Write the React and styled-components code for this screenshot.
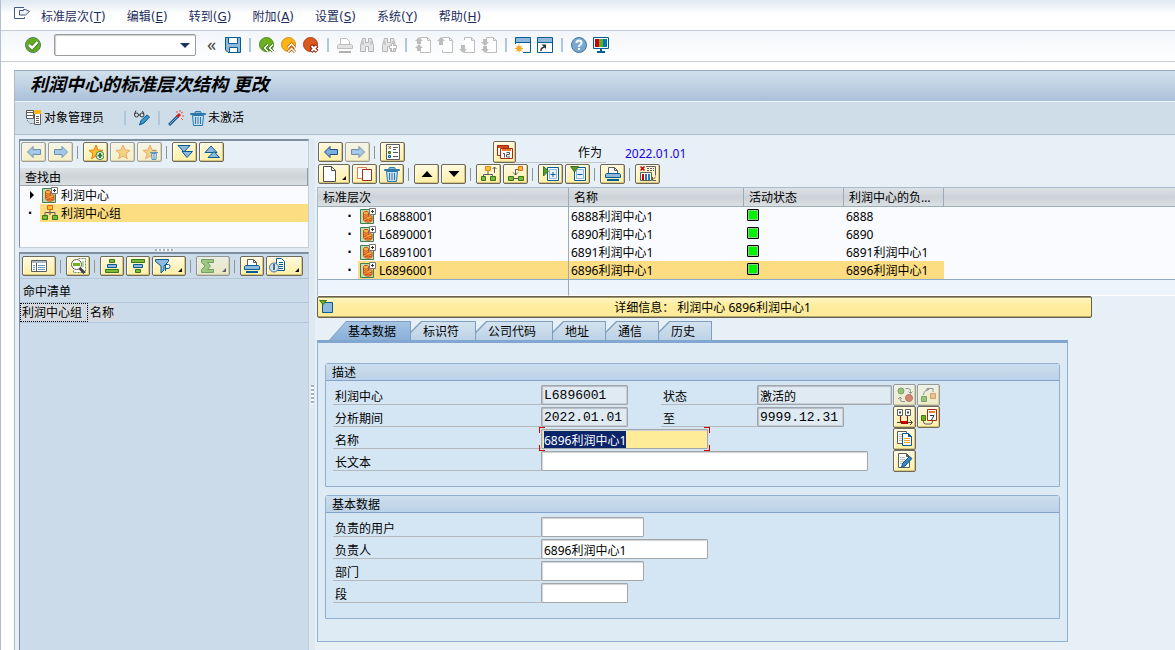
// App.jsx

import React, { useEffect, useRef } from 'react';
import styled, { createGlobalStyle, css } from 'styled-components';

const GlobalStyle = createGlobalStyle`
  * {
    box-sizing: border-box;
  }
  body {
    margin: 0;
    background: #fff;
    color: #000;
    font: 12px/16px 'Noto Sans', 'Noto Sans CJK SC', sans-serif;
  }
  button, input {
    font: inherit;
    color: inherit;
    margin: 0;
  }
  ::selection {
    background: #0a246a;
    color: #fff;
  }
`;

/* ---------- icons ---------- */

const BLUE = '#045d92';
const SKY = '#8fb8dc';
const GREEN = '#6fb021';
const ORANGE = '#f5a623';
const RED = '#d2481f';
const GREY = '#5c5c5c';
const OFF = '#bdbdbd';

const page = (
  <path d="M5.5 3V.5h7l3 3v12h-10V13M12.5 .5v3h3" fill="#fff" stroke={OFF} />
);

const profitCenter = (
  <>
    <path d="M.5 1.5h13v14H.5z" fill="#bfdcb4" stroke="#41804a" />
    <path d="M3.5 4.500c0-1.500 5-1.500 5 0v4c1-1 3.500-1 3.500 0v4c0 1.500-4 2-5.500 1.500-2-.5-3-1.500-3-3z" fill="#f8b43a" stroke="#d2481f" />
    <path d="M3.500 6.500q2.500 1.500 5 0M3.500 8.500q2.500 1.500 5 0M4 10.500q4 2 8-.5M5 12.500q4 1 7-.5" fill="none" stroke="#d2481f" />
    <path d="M9.500 .5h6v6h-6z" fill="#fff" stroke="#777" />
    <path d="M12.500 2v3M11 3.500h3" stroke="#333" />
  </>
);

const star = (
  <path d="M8 1l2 5 5 .4-4 3.400 1.300 5L8 12l-4.400 2.800L5 9.800 1 6.400 6 6z" fill="#fbc02d" stroke="#ee7a1c" />
);

const printer = (
  <>
    <path d="M3.500 7.500v-6h6l3 3v3z" fill="#fff" stroke={GREY} />
    <path d="M9.500 1.500v3h3" fill="none" stroke={GREY} />
    <path d="M1.500 7.500h13l1 1v3H.5v-3z" fill={SKY} stroke={BLUE} />
    <path d="M2 14h12" stroke={BLUE} strokeWidth="2" />
  </>
);

const binoculars = (
  <path
    d="M3.500 1.500h3v4h3v-4h3l2 7v6h-5v-5h-3v5h-5v-6zM4 4v4M12 4v4"
    fill="#e4e4e4"
    stroke="#b5b5b5"
  />
);

const trash = (
  <>
    <path d="M2.500 5.500h11l-1 10h-9z" fill="#c5dff0" stroke="#2c78ab" />
    <path d="M.5 3.500h15v1H.5zM4.500 3.500l1-2h5l1 2" fill={SKY} stroke="#2c78ab" />
    <path d="M5.500 7v7M8 7v7M10.500 7v7" stroke="#2c78ab" />
  </>
);

const icons = {
  exit: (
    <>
      <path d="M10 .5H.5v11h10V10" fill="none" stroke="#44577f" />
      <path d="M5.500 3.500h4v-1h2l4 2-4 3.500h-6z" fill="#eef3fb" stroke="#44577f" />
    </>
  ),
  check: (
    <>
      <circle cx="8" cy="8" r="7.500" fill="#65ab20" stroke="#4c8060" />
      <path d="M4 8l3 3 5.500-6" fill="none" stroke="#3c7420" strokeWidth="4" />
      <path d="M4 8l3 3 5.500-6" fill="none" stroke="#fff" strokeWidth="2.500" />
    </>
  ),
  save: (
    <>
      <path d="M.5 .5h15v15H3l-2.500-2.500z" fill={SKY} stroke={BLUE} />
      <path d="M3.500 .5h9v6h-9z" fill="#fff" stroke={BLUE} />
      <path d="M4.500 10.500h8v5h-8z" fill="#fff" stroke={BLUE} />
    </>
  ),
  back: (
    <>
      <circle cx="7.500" cy="7.500" r="7" fill="#6fb021" stroke="#4d8b1f" />
      <path d="M9 7.500l-3.500 3.500L9 14.500M14 7.500L10.500 11l3.500 3.500" fill="none" stroke="#356f12" strokeWidth="3" />
      <path d="M9 7.500l-3.500 3.500L9 14.500M14 7.500L10.500 11l3.500 3.500" fill="none" stroke="#fff" strokeWidth="1.500" />
    </>
  ),
  up: (
    <>
      <circle cx="7.500" cy="7.500" r="7" fill="#fcb514" stroke="#d98e0b" />
      <path d="M7 10.500L10.500 7l3.500 3.500M7 15l3.500-3.500L14 15" fill="none" stroke="#b5560e" strokeWidth="3" />
      <path d="M7 10.500L10.500 7l3.500 3.500M7 15l3.500-3.500L14 15" fill="none" stroke="#fff" strokeWidth="1.500" />
    </>
  ),
  cancel: (
    <>
      <circle cx="7.500" cy="7.500" r="7" fill="#d95a1c" stroke="#b23c10" />
      <path d="M8 8.500l6 6M14 8.500l-6 6" stroke="#8c2109" strokeWidth="4" />
      <path d="M8.500 9l5 5M13.500 9l-5 5" stroke="#fff" strokeWidth="2" />
    </>
  ),
  printOff: (
    <>
      <path d="M3.500 7.500v-6h6l3 3v3" fill="#fff" stroke={OFF} />
      <path d="M1.500 7.500h13l1 1v3H.5v-3z" fill="#e2e2e2" stroke={OFF} />
      <path d="M2 15h12" stroke="#b0b0b0" strokeWidth="2" />
    </>
  ),
  find: binoculars,
  findNext: (
    <>
      {binoculars}
      <path d="M10.500 6.500h2v2h3v3h-3v3h-2v-3h-2v-3h2z" fill="#fff" stroke="#b5b5b5" />
    </>
  ),
  firstPage: (
    <>
      {page}
      <path d="M0 4l4-4 4 4H6v3H2V4zM0 11l4-4 4 4H6v3H2v-3z" fill={OFF} />
    </>
  ),
  prevPage: (
    <>
      {page}
      <path d="M0 4l4-4 4 4H6v4H2V4z" fill={OFF} />
    </>
  ),
  nextPage: (
    <>
      {page}
      <path d="M0 12l4 4 4-4H6V8H2v4z" fill={OFF} />
    </>
  ),
  lastPage: (
    <>
      {page}
      <path d="M0 5l4 4 4-4H6V2H2v3zM0 12l4 4 4-4H6V9H2v3z" fill={OFF} />
    </>
  ),
  newWindow: (
    <>
      <path d="M.5 .5h15v15h-15z" fill="#fff" stroke={BLUE} />
      <path d="M1 1h14v4H1z" fill={SKY} />
      <path d="M1 5.500h14" stroke={BLUE} />
      <path d="M0 7h8v9H0z" fill="#fff" />
      <path d="M4 7.500v8M0 11.500h8M1 8.500l6 6M7 8.500l-6 6" stroke={ORANGE} />
      <circle cx="4" cy="11.500" r="2.500" fill={ORANGE} />
    </>
  ),
  shortcut: (
    <>
      <path d="M.5 .5h15v15h-15z" fill="#fff" stroke={BLUE} />
      <path d="M1 1h14v4H1z" fill={SKY} />
      <path d="M1 5.500h14" stroke={BLUE} />
      <path d="M4 14q-.5-3 3.500-4" fill="none" stroke="#333" strokeWidth="1.500" />
      <path d="M4.500 7.500H9V12z" fill="#333" />
    </>
  ),
  help: (
    <>
      <circle cx="8" cy="8" r="7.500" fill="#78a8ce" stroke="#41789f" />
      <path d="M5.500 6q0-2.500 2.500-2.500T10.500 6q0 1-1.300 1.800T8 9.800M8 11v2" fill="none" stroke="#fff" strokeWidth="2" />
    </>
  ),
  monitor: (
    <>
      <path d="M.5 .5h15v11H.5z" fill="#fff" stroke={BLUE} />
      <path d="M2 2h4v8H2z" fill="#d00000" />
      <path d="M6 2h4v8H6z" fill="#63ad1c" />
      <path d="M10 2h4v8h-4z" fill="#0077bb" />
      <path d="M8 12v3M4 15h8" stroke={BLUE} strokeWidth="2" />
    </>
  ),
  objectManager: (
    <>
      <path d="M.5 .5h7v8h-7z" fill="#fff" stroke={GREY} />
      <path d="M1 2.500h6M1 5.500h6" stroke={GREY} />
      <path d="M8.500 .5h6v14h-6z" fill="#fff" stroke={GREY} />
      <path d="M8 0h7v4H8z" fill="#fbb51a" />
      <path d="M10 6.500h3M10 8.500h3M10 10.500h3M10 12.500h3" stroke={GREY} />
      <path d="M1 10l3 3.500h4" fill="none" stroke={GREY} strokeDasharray="1 1" />
    </>
  ),
  glassesPencil: (
    <>
      <circle cx="2.500" cy="5" r="2" fill="none" stroke="#333" />
      <circle cx="8" cy="5" r="2" fill="none" stroke="#333" />
      <path d="M.5 4L2 .5M10 4L8.500 1M4.500 5h1.500" stroke="#333" fill="none" />
      <path d="M5.500 15l1.500-4.500 6-5.500 2.500 2L10 13z" fill="#3f93ca" stroke={BLUE} />
    </>
  ),
  wand: (
    <>
      <path d="M1 15L10 6" stroke="#205a8c" strokeWidth="3" />
      <path d="M1.500 14.500L9 7" stroke="#74acd6" />
      <path d="M9 7l3-3" stroke="#d21f1f" strokeWidth="3" />
      <path d="M9 1v2M12 0v2M15 2l-2 1M14 6h2M13 8l2 2" stroke="#e8592a" />
    </>
  ),
  trash,
  arrowLeft: (
    <path d="M1.500 8L7 2.500v3h7.500v5H7v3z" fill="#79aede" stroke="#1c527f" />
  ),
  arrowRight: (
    <path d="M14.500 8L9 2.500v3H1.500v5H9v3z" fill="#79aede" stroke="#1c527f" />
  ),
  starAdd: (
    <>
      {star}
      <circle cx="12" cy="11.500" r="4" fill="#fff" stroke="#397a43" />
      <path d="M12 9v5M9.500 11.500h5" stroke="#2e7d32" strokeWidth="2" />
    </>
  ),
  star,
  starTrash: (
    <>
      {star}
      <path d="M9.500 9.500h5l-.5 6h-4z" fill="#c5dff0" stroke={BLUE} />
      <path d="M8 8.500h8M10.500 6.500h3M12 10v5" stroke={BLUE} />
    </>
  ),
  expandAll: (
    <>
      <path d="M5 7.500h10.500L10 13.500z" fill={SKY} stroke={BLUE} />
      <path d="M1 1.500h12L7 8z" fill={SKY} stroke={BLUE} />
    </>
  ),
  collapseAll: (
    <>
      <path d="M1 8.500h12L7 2z" fill={SKY} stroke={BLUE} />
      <path d="M4 13.500h11.500L10 7.500z" fill={SKY} stroke={BLUE} />
    </>
  ),
  profitCenter,
  group: (
    <>
      <path d="M8 5v5M3 10V7.500h10V10" fill="none" stroke={GREY} />
      <path d="M5.500 .5h5v4h-5z" fill="#fbc02d" stroke="#e8641b" />
      <path d="M.5 10.500h5v4h-5zM10.500 10.500h5v4h-5z" fill="#7cba3a" stroke="#3c7420" />
    </>
  ),
  detailList: (
    <>
      <path d="M.5 2.500h15v11H.5z" fill="#fff" stroke={GREY} />
      <path d="M1 3h14v2H1z" fill="#aab8c4" />
      <path d="M5.500 5v8" stroke={GREY} />
      <path d="M2 7.500h2M2 9.500h2M2 11.500h2M7 7.500h7M7 9.500h7M7 11.500h7" stroke="#6699c2" />
    </>
  ),
  magnifier: (
    <>
      <path d="M8.500 .5h7v14h-12v-3" fill="#fff" stroke="#6c8f5c" strokeDasharray="2 1" />
      <circle cx="6.500" cy="6.500" r="5" fill="#fff" stroke={GREY} />
      <path d="M3 5h7v3H3z" fill={GREEN} />
      <path d="M9.500 10l5 5" stroke="#444" strokeWidth="3" />
      <path d="M12 4h2M12 6h2M12 8h2" stroke={GREEN} />
    </>
  ),
  sortAsc: (
    <>
      <path d="M5.500 1.500h5v3h-5z" fill="#7cba3a" stroke="#3c7420" />
      <path d="M3.500 6.500h9v3h-9z" fill={SKY} stroke={BLUE} />
      <path d="M1.500 11.500h13v3h-13z" fill="#7cba3a" stroke="#3c7420" />
    </>
  ),
  sortDesc: (
    <>
      <path d="M1.500 1.500h13v3h-13z" fill="#7cba3a" stroke="#3c7420" />
      <path d="M3.500 6.500h9v3h-9z" fill={SKY} stroke={BLUE} />
      <path d="M5.500 11.500h5v3h-5z" fill="#7cba3a" stroke="#3c7420" />
    </>
  ),
  filter: (
    <>
      <path d="M.5 1.500h13v2L9 8v4l-3 3V8L.5 3.500z" fill={SKY} stroke={BLUE} />
      <path d="M10.500 13V6.500h3q1.500 0 1.500 2t-1.500 2h-3" fill="#fff" stroke={BLUE} />
    </>
  ),
  sum: (
    <path d="M2.500 1.500h12v3h-6l3 3.500-3 3.500h6v3h-12v-3L6 8 2.500 4.500z" fill="#7cba3a" stroke="#3c7420" />
  ),
  printer,
  layoutView: (
    <>
      <path d="M7.500 .5h5l3 3v9h-8z" fill="#fff" stroke={BLUE} />
      <path d="M10 4.500h4M10 6.500h4M10 8.500h4M10 10.500h4" stroke={BLUE} />
      <circle cx="5" cy="9.500" r="4.500" fill="#d2e2ee" stroke="#49728f" />
      <path d="M5 6v6" stroke="#49728f" strokeWidth="2" />
    </>
  ),
  checklist: (
    <>
      <path d="M1.500 .5h13v15h-13z" fill="#fff" stroke={GREY} />
      <path d="M3.500 2l2.500 3M6 2L3.500 5" stroke="#8a6516" />
      <path d="M3.500 7.500h2v2h-2z" fill={GREEN} stroke="#3c7420" />
      <path d="M3.500 11.500h2v2h-2z" fill={SKY} stroke={BLUE} />
      <path d="M8 3.500h5M8 5.500h3M8 8.500h5M8 12.500h5" stroke={GREY} />
    </>
  ),
  calendar: (
    <>
      <path d="M.5 1.500h11v10H.5z" fill="#fff" stroke="#a3290f" />
      <path d="M1 2h10v2H1z" fill={RED} />
      <path d="M3.500 4.500h12v10h-12z" fill="#fff" stroke="#a3290f" />
      <path d="M5 5h9v2H5z" fill="#f07a28" />
      <path d="M6 9.500h1.500v4M9.500 8.500h3v2h-3v2.500h3.500" fill="none" stroke="#555" />
    </>
  ),
  create: (
    <path d="M2.500 .5h8l4 4v11h-12zM10.500 .5v4h4" fill="#fff" stroke="#4f4f4f" />
  ),
  copy: (
    <>
      <path d="M.5 1.500h9v11h-9z" fill="#fff" stroke="#d9805e" />
      <path d="M5.500 3.500h9v11h-9z" fill="#fff" stroke="#a3290f" />
    </>
  ),
  triUp: <path d="M2.500 11L8 5l5.500 6z" fill="#000" />,
  triDown: <path d="M2.500 5L8 11l5.500-6z" fill="#000" />,
  moveUp: (
    <>
      <path d="M7 5v4M2.500 11V8.500h9V11" fill="none" stroke={GREY} />
      <path d="M4.500 .5h5v4h-5z" fill="#fbc02d" stroke="#e8891b" />
      <path d="M.5 10.500h4v4h-4zM9.500 10.500h5v4h-5z" fill="#7cba3a" stroke="#3c7420" />
      <path d="M13.500 7V1M11.500 3l2-2 2 2" fill="none" stroke={GREY} />
    </>
  ),
  moveDown: (
    <>
      <path d="M10 3.500H7.500V9M5 6.500L7.500 9 10 6.500M5 12.500h5" fill="none" stroke={GREY} />
      <path d="M10.500 .5h4v4h-4z" fill="#fbc02d" stroke="#e8641b" />
      <path d="M.5 10.500h5v4h-5zM10.500 10.500h5v4h-5z" fill="#7cba3a" stroke="#3c7420" />
    </>
  ),
  expandNode: (
    <>
      <path d="M4.500 1.500h11v13h-11z" fill="#fff" stroke={BLUE} />
      <path d="M6.500 3.500h7v9h-7z" fill="#e7f1f9" stroke={SKY} />
      <path d="M10 6v5M7.500 8.500h5" stroke={BLUE} />
      <path d="M.5 .5L5.500 5l-5 5z" fill="#58982c" stroke="#3c7420" />
    </>
  ),
  collapseNode: (
    <>
      <path d="M4.500 1.500h11v13h-11z" fill="#fff" stroke={BLUE} />
      <path d="M6.500 3.500h7v9h-7z" fill="#e7f1f9" stroke={SKY} />
      <path d="M7.500 8.500h5" stroke={BLUE} />
      <path d="M.5 .5h8L4.500 6z" fill="#58982c" stroke="#3c7420" />
    </>
  ),
  tableDelete: (
    <>
      <path d="M6 .5h9.500v9" fill="none" stroke={GREY} />
      <path d="M7 2.500h7M7 4.500h7" stroke={GREY} strokeDasharray="2 1" />
      <path d="M.5 .5l4 4M4.500 .5l-4 4" stroke="#c00" strokeWidth="1.500" />
      <path d="M.5 6.500h11v8H.5z" fill="#fff" stroke={GREY} />
      <path d="M3 8v6" stroke="#c00" strokeWidth="2" />
      <path d="M6 8v6M9 8v6" stroke="#2b78b5" strokeWidth="2" />
      <path d="M16 10.500l-3 3M12.500 11v3.500H16" fill="none" stroke={GREY} />
    </>
  ),
  detail: (
    <>
      <path d="M3.500 3.500h10v10h-10z" fill={SKY} stroke={BLUE} />
      <path d="M.5 1.500h7L4 5.500z" fill="#6fb021" stroke="#3c7420" />
    </>
  ),
  toggle: (
    <>
      <circle cx="4" cy="4" r="3" fill={GREEN} stroke="#3c7420" />
      <circle cx="12" cy="11" r="3.500" fill={RED} stroke="#a3290f" />
      <path d="M8.500 1.500h3q2 0 2 3v2M11.500 4.500l2 2 2-2M8 14.500H5q-2 0-2-3v-1M1 12l2-2 2 2" fill="none" stroke={GREY} />
    </>
  ),
  route: (
    <>
      <path d="M.5 9.500h5v5h-5z" fill={GREEN} stroke="#3c7420" />
      <path d="M9.500 6.500h5v5h-5z" fill="#fbb040" stroke="#d0701b" />
      <path d="M2.500 8Q3 3 8 2.500M6 4V1.500h6V5" fill="none" stroke={GREY} />
    </>
  ),
  timeline: (
    <>
      <path d="M.5 .5h5v6h-5zM8.500 .5h5v6h-5z" fill="#fff" stroke={GREY} />
      <path d="M2 3.500h2M10 3.500h2" stroke="#345" strokeWidth="2" />
      <path d="M3.500 7v6M10.500 7v6" stroke="#c00000" />
      <path d="M0 13.500h15M13 11l2.500 2.500L13 16" fill="none" stroke="#444" />
      <path d="M4 13.500h7" stroke="#c00000" strokeWidth="3" />
    </>
  ),
  calendarLink: (
    <>
      <path d="M6.500 .5h9v11h-9z" fill="#fff" stroke="#a3290f" />
      <path d="M8 2h6v2H8z" fill="#f07a28" />
      <path d="M9 6.500h4L10.500 11" fill="none" stroke="#333" />
      <path d="M.5 6.500h4v5h-4z" fill={GREEN} stroke="#3c7420" />
      <path d="M2.500 12q0 3 2 3h5q2 0 2-3" fill="none" stroke={GREY} />
    </>
  ),
  copyDoc: (
    <>
      <path d="M.5 .5h9v12h-9z" fill="#fff" stroke={GREY} />
      <path d="M2 3.500h3M2 5.500h3M2 7.500h3M2 9.500h3" stroke={OFF} />
      <path d="M5.500 2.500h6l3 3v9h-9z" fill="#fff" stroke={BLUE} />
      <path d="M11.500 2.500v3h3" fill={BLUE} stroke={BLUE} />
      <path d="M7 7.500h6M7 9.500h6M7 11.500h6" stroke="#f3a51e" />
    </>
  ),
  editDoc: (
    <>
      <path d="M1.500 .5h8l3 3v11h-11z" fill="#fff" stroke={GREY} />
      <path d="M9.500 .5v3h3" fill={GREY} stroke={GREY} />
      <path d="M3 4.500h5M3 6.500h5M3 8.500h4M3 10.500h3" stroke={OFF} />
      <path d="M4.500 14.500l1-4 7-7 2.500 2-7 7.500z" fill="#3f86bb" stroke={BLUE} />
    </>
  ),
};

const Svg = styled.svg`
  display: block;
  flex: none;
  width: 16px;
  height: 16px;
`;

function Icon({ name }) {
  return (
    <Svg viewBox="0 0 16 16" aria-hidden="true">
      {icons[name]}
    </Svg>
  );
}

/* ---------- window chrome ---------- */

const Window = styled.div`
  display: flex;
  flex-direction: column;
  min-height: 100vh;
  border-left: 1px solid #b4bfd0;
  background: #fff;
`;

const MenuBar = styled.nav`
  display: flex;
  align-items: center;
  gap: 21px;
  height: 31px;
  padding: 3px 0 0 13px;
  border-bottom: 1px solid #c5cbd4;
  background: linear-gradient(#dfe8f1, #fff 14px);
`;

const SystemButton = styled.button`
  padding: 0;
  margin-right: -10px;
  margin-bottom: 4px;
  border: 0;
  background: none;
`;

const MenuItem = styled.button`
  padding: 0;
  border: 0;
  background: none;
  color: #1d2c5c;
  font-family: 'DejaVu Sans', 'Noto Sans CJK SC', sans-serif;
`;

const CommandBar = styled.div`
  display: flex;
  align-items: center;
  gap: 6px;
  height: 31px;
  padding: 0 0 2px 24px;
  border-bottom: 1px solid #c5cbd4;
  background: linear-gradient(#f2f5f9, #fff);
`;

const BareButton = styled.button`
  display: flex;
  align-items: center;
  gap: 2px;
  padding: 0;
  border: 0;
  background: none;
`;

const CommandBox = styled.div`
  display: flex;
  align-items: center;
  width: 142px;
  height: 22px;
  margin: 0 4px 0 7px;
  border: 1px solid #9c9c9c;
  border-radius: 2px;
  background: #fff;
  box-shadow: inset 1px 1px 1px #ccc;
`;

const CommandInput = styled.input`
  flex: 1;
  min-width: 0;
  border: 0;
  outline: 0;
  background: none;
`;

const DropArrow = styled.button`
  width: 20px;
  height: 20px;
  padding: 0;
  border: 0;
  background: none;
  &::before {
    content: '';
    display: block;
    width: 0;
    margin: auto;
    border: 5px solid transparent;
    border-top-color: #1d355e;
    border-bottom: 0;
  }
`;

const Collapse = styled.button`
  width: 11px;
  margin-right: 2px;
  padding: 0 0 2px;
  border: 0;
  background: none;
  color: #444;
  font: 18px/18px 'Noto Sans', sans-serif;
`;

const BlueSep = styled.i`
  width: 2px;
  height: 14px;
  margin: 0 2px;
  background: #b0c6dc;
`;

const Frame = styled.div`
  display: flex;
  flex: 1;
  flex-direction: column;
  margin: 8px 0 0 13px;
  border-top: 1px solid #94a8c4;
  border-left: 1px solid #a9bacd;
  background: #e8f0f7;
`;

const Title = styled.h1`
  height: 31px;
  margin: 0;
  padding-left: 15px;
  border-bottom: 1px solid #f0f5fa;
  background: linear-gradient(#d2e0ec, #bfd1e3 50%, #a9c0d9);
  font-size: 18px;
  font-style: italic;
  font-weight: 700;
  line-height: 26px;
`;

const AppBar = styled.div`
  display: flex;
  align-items: center;
  gap: 6px;
  height: 33px;
  padding-left: 11px;
  border-bottom: 1px solid #aebdce;
  background: #cfdde8;
`;

const Gap = styled.span`
  width: ${props => props.$w}px;
`;

const Body = styled.div`
  display: flex;
  flex: 1;
  padding: 4px 0 0 4px;
`;

/* ---------- buttons ---------- */

const YellowButton = styled.button`
  display: flex;
  align-items: center;
  justify-content: center;
  flex: none;
  width: ${props => props.$w || 25}px;
  height: ${props => props.$h || 20}px;
  padding: 0;
  border: 1px solid #6f6a58;
  border-radius: 2px;
  background: linear-gradient(#fff9de, #ffefa5);
  box-shadow: inset -1px -1px 0 #d6c480, inset 1px 1px 0 #fffbe8;
  &:disabled {
    opacity: 0.6;
  }
  ${props =>
    props.$menu &&
    css`
      justify-content: space-between;
      padding-left: 2px;
      &::after {
        content: '';
        align-self: flex-end;
        margin: 0 3px 3px 0;
        border: 2px solid #111;
        border-top-color: transparent;
        border-left-color: transparent;
      }
    `}
`;

const Sep = styled.i`
  flex: none;
  width: 1px;
  height: 13px;
  margin: 0 3px 0 2px;
  background: #8f9499;
`;

function Tool({ icon, ...rest }) {
  return (
    <YellowButton type="button" aria-label={icon} {...rest}>
      <Icon name={icon} />
    </YellowButton>
  );
}

const ToolRow = styled.div`
  display: flex;
  align-items: center;
  gap: 2px;
  height: 22px;
  padding-left: 1px;
`;

/* ---------- left side ---------- */

const Side = styled.aside`
  display: flex;
  flex: 0 0 290px;
  flex-direction: column;
`;

const Pane = styled.section`
  border-top: 2px solid #7d8fa1;
  border-left: 1px solid #7d8fa1;
  border-right: 1px solid #c3d0dc;
`;

const SearchPane = styled(Pane)`
  height: 109px;
  border-bottom: 1px solid #c3d0dc;
  background: #f9fbff;
`;

const SearchTools = styled.div`
  padding-bottom: 5px;
  background: #e8f0f7;
`;

const SearchHead = styled.div`
  height: 18px;
  padding: 2px 5px 0;
  border-right: 1px solid #8d99a4;
  border-bottom: 1px solid #9aa5ae;
  background: linear-gradient(#dce0e3, #cdd3d7 50%, #dadfe2);
`;

const TreeRow = styled.div`
  display: flex;
  align-items: center;
  height: 18px;
`;

const Marker = styled.span`
  flex: none;
  width: 20px;
  text-align: center;
  font: bold 12px/18px 'DejaVu Sans', sans-serif;
`;

const TreeArrow = styled.i`
  display: block;
  margin-left: 10px;
  width: 0;
  border: 4px solid transparent;
  border-left-color: #000;
  border-right: 0;
`;

const TreeLabel = styled.span`
  display: flex;
  flex: 1;
  align-items: center;
  gap: 3px;
  height: 18px;
  padding-left: 2px;
  background: ${props => (props.$on ? '#fddd82' : 'none')};
  span {
    padding-top: 2px;
  }
`;

const Grip = styled.div`
  display: flex;
  align-items: center;
  justify-content: center;
  ${props => (props.$vertical ? 'width: 6px;' : 'height: 4px;')}
  background: #dfe9f1;
  &::before {
    content: '';
    ${props =>
      props.$vertical
        ? css`
            width: 3px;
            height: 19px;
            background: repeating-linear-gradient(#a4b0bb 0 2px, #fff 2px 4px);
          `
        : css`
            width: 19px;
            height: 2px;
            background: repeating-linear-gradient(90deg, #a4b0bb 0 2px, #fff 2px 4px);
          `}
  }
`;

const HitPane = styled(Pane)`
  flex: 1;
  background: #cbdbe9;
`;

const HitTools = styled(ToolRow)`
  height: 25px;
  padding-left: 2px;
  border-bottom: 1px solid #b3c6d9;
`;

const HitTitle = styled.div`
  height: 24px;
  padding: 5px 3px 0;
  border-bottom: 1px solid #b3c6d9;
`;

const HitTable = styled.table`
  width: 100%;
  border-collapse: collapse;
  border-bottom: 1px solid #b3c6d9;
  th {
    width: 68px;
    height: 19px;
    padding: 1px 1px 1px;
    font-weight: 400;
    text-align: left;
    white-space: nowrap;
  }
  span {
    display: block;
    height: 17px;
    padding: 1px 0 0 1px;
    background: #d6dadf;
  }
  th:first-child span {
    outline: 1px dotted #000;
  }
  th:nth-child(2) {
    width: 30px;
  }
  th:last-child {
    width: auto;
  }
`;

/* ---------- right side ---------- */

const Main = styled.main`
  flex: 1;
  min-width: 0;
  padding: 2px 0 0 2px;
`;

const AsOf = styled.div`
  display: flex;
  align-items: center;
  margin-left: 86px;
`;

const AsOfLabel = styled.span`
  width: 90px;
  height: 21px;
  padding: 3px 4px 0 0;
  border-bottom: 1px solid #c2c6ca;
  text-align: right;
`;

const AsOfDate = styled.span`
  padding: 4px 0 0 19px;
  color: #1a00e6;
`;

const GridTable = styled.table`
  width: 100%;
  margin-top: 2px;
  border-collapse: separate;
  border-spacing: 0;
  table-layout: fixed;
  border-top: 1px solid #a9bccd;
  border-left: 1px solid #a9bccd;
  background: #f9fbff;
  th {
    height: 19px;
    padding: 1px 5px 0;
    border-right: 1px solid #9aabba;
    border-bottom: 1px solid #9aabba;
    background: linear-gradient(#dde1e4, #ccd2d7 50%, #dadfe2);
    font-weight: 400;
    text-align: left;
  }
  th:last-child {
    border-right: 0;
  }
  td {
    height: 18px;
    padding: 2px 2px 0;
    white-space: nowrap;
  }
  td:first-child {
    padding: 0;
    border-right: 1px solid #9aabba;
  }
`;

const GridRow = styled.tr`
  td:not(:first-child):not(:last-child) {
    background: ${props => (props.$on ? '#fddd82' : 'none')};
  }
  td:nth-child(3) {
    padding: 0 2px 2px;
  }
`;

const BlankRow = styled.tr`
  td {
    height: 17px;
    padding: 0;
    border-top: 1px solid #8fa9c4;
    border-bottom: 1px solid #fff;
    background: #edf4fc;
  }
`;

const Bullet = styled(Marker)`
  width: 21px;
  margin-left: 19px;
  padding-left: 4px;
`;

const Status = styled.i`
  display: block;
  width: 12px;
  height: 12px;
  margin-left: 1px;
  border: 1px solid #000;
  border-radius: 1px;
  background: #00f400;
  box-shadow: inset 0 0 0 1px #8fd08f;
`;

const DetailBar = styled.button`
  display: flex;
  align-items: center;
  width: calc(100% - 83px);
  height: 22px;
  padding: 0 1px;
  border: 1px solid #66614f;
  border-radius: 2px;
  background: linear-gradient(#fff6c8, #ffed9e 40%, #ffeb98);
  box-shadow: inset 0 -1px 0 #b5a566, inset 0 1px 0 #a09668;
  span {
    flex: 1;
    padding-top: 2px;
    white-space: pre;
    text-align: center;
  }
`;

const Tabs = styled.div`
  display: flex;
  margin-top: 3px;
  padding-left: 12px;
`;

const Tab = styled.button`
  position: relative;
  height: 19px;
  padding: ${props => (props.$on ? '0 15px 0 19px' : '0 17px 0 12px')};
  border: 0;
  background: #7f9fc0;
  line-height: 22px;
  clip-path: ${props =>
    props.$on
      ? 'polygon(0 100%, 17px 0, 100% 0, 100% 100%)'
      : 'polygon(0 10px, 10px 0, 100% 0, 100% 100%, 0 100%)'};
  span {
    position: relative;
  }
  &::before {
    content: '';
    position: absolute;
    inset: 1px 1px 0 0;
    background: ${props =>
      props.$on ? 'linear-gradient(#a5c3e3, #8bafd9)' : 'linear-gradient(#d3e2ef, #bcd2e5)'};
    clip-path: ${props =>
      props.$on
        ? 'polygon(1px 100%, 17px 0, 100% 0, 100% 100%)'
        : 'polygon(0 11px, 11px 0, 100% 0, 100% 100%, 0 100%)'};
  }
`;

const Sheet = styled.form`
  margin-right: 107px;
  padding: 20px 7px 22px;
  border: 1px solid #8fb0d0;
  border-top: 3px solid #81a6cf;
  background: #dfebf4;
`;

const Group = styled.fieldset`
  min-width: 0;
  margin: 0;
  padding: 0 0 15px;
  border: 1px solid #8fb0d0;
  border-radius: 3px 3px 0 0;
  background: #d4e5f3;
  & + & {
    margin-top: 8px;
  }
`;

const GroupTitle = styled.legend`
  float: left;
  width: 100%;
  height: 17px;
  margin-bottom: 4px;
  padding: 0 6px;
  border-bottom: 1px solid #83a4c8;
  background: linear-gradient(#ccdeed, #bcd2e7);
  line-height: 17px;
`;

const Fields = styled.div`
  display: grid;
  clear: both;
  grid-template-columns: 208px 120px 96px 136px auto;
  grid-auto-rows: 20px;
  row-gap: 2px;
  align-items: center;
  padding-left: 7px;
`;

const Label = styled.label`
  grid-column: ${props => (props.$second ? 3 : 1)};
  height: 20px;
  padding: 4px 2px 0;
  border-bottom: 1px solid #b5b9bd;
  line-height: 15px;
`;

const Input = styled.input`
  width: ${props => props.$w}px;
  height: 20px;
  padding: 1px 2px 0;
  border: 1px solid #a3a6a9;
  border-radius: 1px;
  outline: 0;
  background: #fff;
  box-shadow: inset 1px 1px 1px #d0d3d6;
  grid-column: ${props => (props.$second ? '4' : '2 / span 3')};
  ${props =>
    props.readOnly &&
    css`
      grid-column: ${props.$second ? 4 : 2};
      background: #dfeaf3;
      box-shadow: inset 1px 1px 1px #b5bcc3, inset -1px -1px 0 #c5ced6;
    `}
  ${props =>
    props.$mono &&
    css`
      font: 13px/18px 'Liberation Mono', monospace;
    `}
  &:focus {
    background: #ffec99;
  }
`;

const FocusFrame = styled.div`
  grid-column: 2 / span 3;
  justify-self: start;
  margin: -2px;
  padding: 2px;
  --c: #d40000;
  background:
    linear-gradient(var(--c), var(--c)) 0 0 / 6px 1px,
    linear-gradient(var(--c), var(--c)) 0 0 / 1px 6px,
    linear-gradient(var(--c), var(--c)) 100% 0 / 6px 1px,
    linear-gradient(var(--c), var(--c)) 100% 0 / 1px 6px,
    linear-gradient(var(--c), var(--c)) 0 100% / 6px 1px,
    linear-gradient(var(--c), var(--c)) 0 100% / 1px 6px,
    linear-gradient(var(--c), var(--c)) 100% 100% / 6px 1px,
    linear-gradient(var(--c), var(--c)) 100% 100% / 1px 6px;
  background-repeat: no-repeat;
  input {
    display: block;
  }
`;

const FieldTools = styled.div`
  display: flex;
  grid-column: 5;
  gap: 1px;
`;

/* ---------- data ---------- */

const menus = [
  ['标准层次', 'T'],
  ['编辑', 'E'],
  ['转到', 'G'],
  ['附加', 'A'],
  ['设置', 'S'],
  ['系统', 'Y'],
  ['帮助', 'H'],
];

const commands = [
  'save', '|', 'back', 'up', 'cancel', '|', 'printOff', 'find', 'findNext', '|',
  'firstPage', 'prevPage', 'nextPage', 'lastPage', '|', 'newWindow', 'shortcut', '|',
  'help', 'monitor',
];

const centers = [
  { id: 'L6888001', name: '6888利润中心1', owner: '6888' },
  { id: 'L6890001', name: '6890利润中心1', owner: '6890' },
  { id: 'L6891001', name: '6891利润中心1', owner: '6891利润中心1' },
  { id: 'L6896001', name: '6896利润中心1', owner: '6896利润中心1' },
];

const tabs = ['基本数据', '标识符', '公司代码', '地址', '通信', '历史'];

/* ---------- sections ---------- */

function Header() {
  return (
    <>
      <MenuBar>
        <SystemButton type="button" aria-label="菜单">
          <Icon name="exit" />
        </SystemButton>
        {menus.map(([text, key]) => (
          <MenuItem key={key} type="button">
            {text}(<u>{key}</u>)
          </MenuItem>
        ))}
      </MenuBar>
      <CommandBar>
        <BareButton type="button" aria-label="回车">
          <Icon name="check" />
        </BareButton>
        <CommandBox>
          <CommandInput aria-label="命令" />
          <DropArrow type="button" aria-label="历史" />
        </CommandBox>
        <Collapse type="button">«</Collapse>
        {commands.map((name, i) =>
          name === '|' ? (
            <BlueSep key={i} />
          ) : (
            <BareButton key={i} type="button" aria-label={name}>
              <Icon name={name} />
            </BareButton>
          )
        )}
      </CommandBar>
    </>
  );
}

function SearchPanel() {
  return (
    <SearchPane>
      <SearchTools>
        <ToolRow>
          <Tool icon="arrowLeft" disabled />
          <Tool icon="arrowRight" disabled />
          <Sep />
          <Tool icon="starAdd" />
          <Tool icon="star" disabled />
          <Tool icon="starTrash" disabled />
          <Sep />
          <Tool icon="expandAll" />
          <Tool icon="collapseAll" />
        </ToolRow>
      </SearchTools>
      <SearchHead>查找由</SearchHead>
      <TreeRow>
        <Marker>
          <TreeArrow />
        </Marker>
        <TreeLabel>
          <Icon name="profitCenter" />
          <span>利润中心</span>
        </TreeLabel>
      </TreeRow>
      <TreeRow>
        <Marker>·</Marker>
        <TreeLabel $on>
          <Icon name="group" />
          <span>利润中心组</span>
        </TreeLabel>
      </TreeRow>
    </SearchPane>
  );
}

function HitPanel() {
  return (
    <HitPane>
      <HitTools>
        <Tool icon="detailList" $w={34} />
        <Sep />
        <Tool icon="magnifier" $w={24} />
        <Sep />
        <Tool icon="sortAsc" $w={24} />
        <Tool icon="sortDesc" $w={24} />
        <Tool icon="filter" $w={34} $menu />
        <Sep />
        <Tool icon="sum" $w={34} $menu disabled />
        <Sep />
        <Tool icon="printer" $w={24} />
        <Tool icon="layoutView" $w={37} $menu />
      </HitTools>
      <HitTitle>命中清单</HitTitle>
      <HitTable>
        <thead>
          <tr>
            <th><span>利润中心组</span></th>
            <th><span>名称</span></th>
            <th />
          </tr>
        </thead>
      </HitTable>
    </HitPane>
  );
}

function CenterGrid() {
  return (
    <GridTable>
      <colgroup>
        <col style={{ width: 251 }} />
        <col style={{ width: 175 }} />
        <col style={{ width: 100 }} />
        <col style={{ width: 100 }} />
        <col />
      </colgroup>
      <thead>
        <tr>
          <th>标准层次</th>
          <th>名称</th>
          <th>活动状态</th>
          <th>利润中心的负…</th>
          <th />
        </tr>
      </thead>
      <tbody>
        {centers.map(({ id, name, owner }) => (
          <GridRow key={id} $on={id === 'L6896001'}>
            <td>
              <TreeRow>
                <Bullet>·</Bullet>
                <TreeLabel $on={id === 'L6896001'}>
                  <Icon name="profitCenter" />
                  <span>{id}</span>
                </TreeLabel>
              </TreeRow>
            </td>
            <td>{name}</td>
            <td>
              <Status />
            </td>
            <td>{owner}</td>
            <td />
          </GridRow>
        ))}
        <BlankRow>
          <td />
          <td />
          <td />
          <td />
          <td />
        </BlankRow>
      </tbody>
    </GridTable>
  );
}

function DetailForm() {
  const nameRef = useRef(null);

  useEffect(() => {
    nameRef.current.focus();
    nameRef.current.select();
  }, []);

  return (
    <Sheet>
      <Group>
        <GroupTitle>描述</GroupTitle>
        <Fields>
          <Label htmlFor="center">利润中心</Label>
          <Input id="center" $w={87} $mono readOnly defaultValue="L6896001" />
          <Label htmlFor="state" $second>状态</Label>
          <Input id="state" $w={135} $second readOnly defaultValue="激活的" />
          <FieldTools>
            <Tool icon="toggle" $w={23} $h={22} disabled />
            <Tool icon="route" $w={23} $h={22} disabled />
          </FieldTools>

          <Label htmlFor="from">分析期间</Label>
          <Input id="from" $w={87} $mono readOnly defaultValue="2022.01.01" />
          <Label htmlFor="to" $second>至</Label>
          <Input id="to" $w={87} $second $mono readOnly defaultValue="9999.12.31" />
          <FieldTools>
            <Tool icon="timeline" $w={23} $h={22} />
            <Tool icon="calendarLink" $w={23} $h={22} />
          </FieldTools>

          <Label htmlFor="name">名称</Label>
          <FocusFrame>
            <Input id="name" ref={nameRef} $w={167} defaultValue="6896利润中心1" />
          </FocusFrame>
          <FieldTools>
            <Tool icon="copyDoc" $w={23} $h={22} />
          </FieldTools>

          <Label htmlFor="long">长文本</Label>
          <Input id="long" $w={327} />
          <FieldTools>
            <Tool icon="editDoc" $w={23} $h={22} />
          </FieldTools>
        </Fields>
      </Group>
      <Group>
        <GroupTitle>基本数据</GroupTitle>
        <Fields>
          <Label htmlFor="user">负责的用户</Label>
          <Input id="user" $w={103} />
          <Label htmlFor="owner">负责人</Label>
          <Input id="owner" $w={167} defaultValue="6896利润中心1" />
          <Label htmlFor="dept">部门</Label>
          <Input id="dept" $w={103} />
          <Label htmlFor="segment">段</Label>
          <Input id="segment" $w={87} />
        </Fields>
      </Group>
    </Sheet>
  );
}

function App() {
  return (
    <Window>
      <GlobalStyle />
      <Header />
      <Frame>
        <Title>利润中心的标准层次结构 更改</Title>
        <AppBar>
          <BareButton type="button">
            <Icon name="objectManager" />
            对象管理员
          </BareButton>
          <Gap $w={6} />
          <BlueSep />
          <BareButton type="button" aria-label="显示/更改">
            <Icon name="glassesPencil" />
          </BareButton>
          <BlueSep />
          <BareButton type="button" aria-label="激活">
            <Icon name="wand" />
          </BareButton>
          <BareButton type="button">
            <Icon name="trash" />
            未激活
          </BareButton>
        </AppBar>
        <Body>
          <Side>
            <SearchPanel />
            <Grip />
            <HitPanel />
          </Side>
          <Grip $vertical />
          <Main>
            <ToolRow>
              <Tool icon="arrowLeft" />
              <Tool icon="arrowRight" disabled />
              <Sep />
              <Tool icon="checklist" />
              <AsOf>
                <Tool icon="calendar" $w={23} $h={22} />
                <AsOfLabel>作为</AsOfLabel>
                <AsOfDate>2022.01.01</AsOfDate>
              </AsOf>
            </ToolRow>
            <ToolRow>
              <Tool icon="create" $w={32} $menu />
              <Tool icon="copy" />
              <Tool icon="trash" />
              <Sep />
              <Tool icon="triUp" />
              <Tool icon="triDown" />
              <Sep />
              <Tool icon="moveUp" />
              <Tool icon="moveDown" />
              <Sep />
              <Tool icon="expandNode" />
              <Tool icon="collapseNode" />
              <Sep />
              <Tool icon="printer" />
              <Sep />
              <Tool icon="tableDelete" />
            </ToolRow>
            <CenterGrid />
            <DetailBar type="button">
              <Icon name="detail" />
              <span>详细信息： 利润中心 6896利润中心1</span>
            </DetailBar>
            <Tabs role="tablist">
              {tabs.map((text, i) => (
                <Tab key={text} type="button" role="tab" aria-selected={i === 0} $on={i === 0}>
                  <span>{text}</span>
                </Tab>
              ))}
            </Tabs>
            <DetailForm />
          </Main>
        </Body>
      </Frame>
    </Window>
  );
}

export default App;
